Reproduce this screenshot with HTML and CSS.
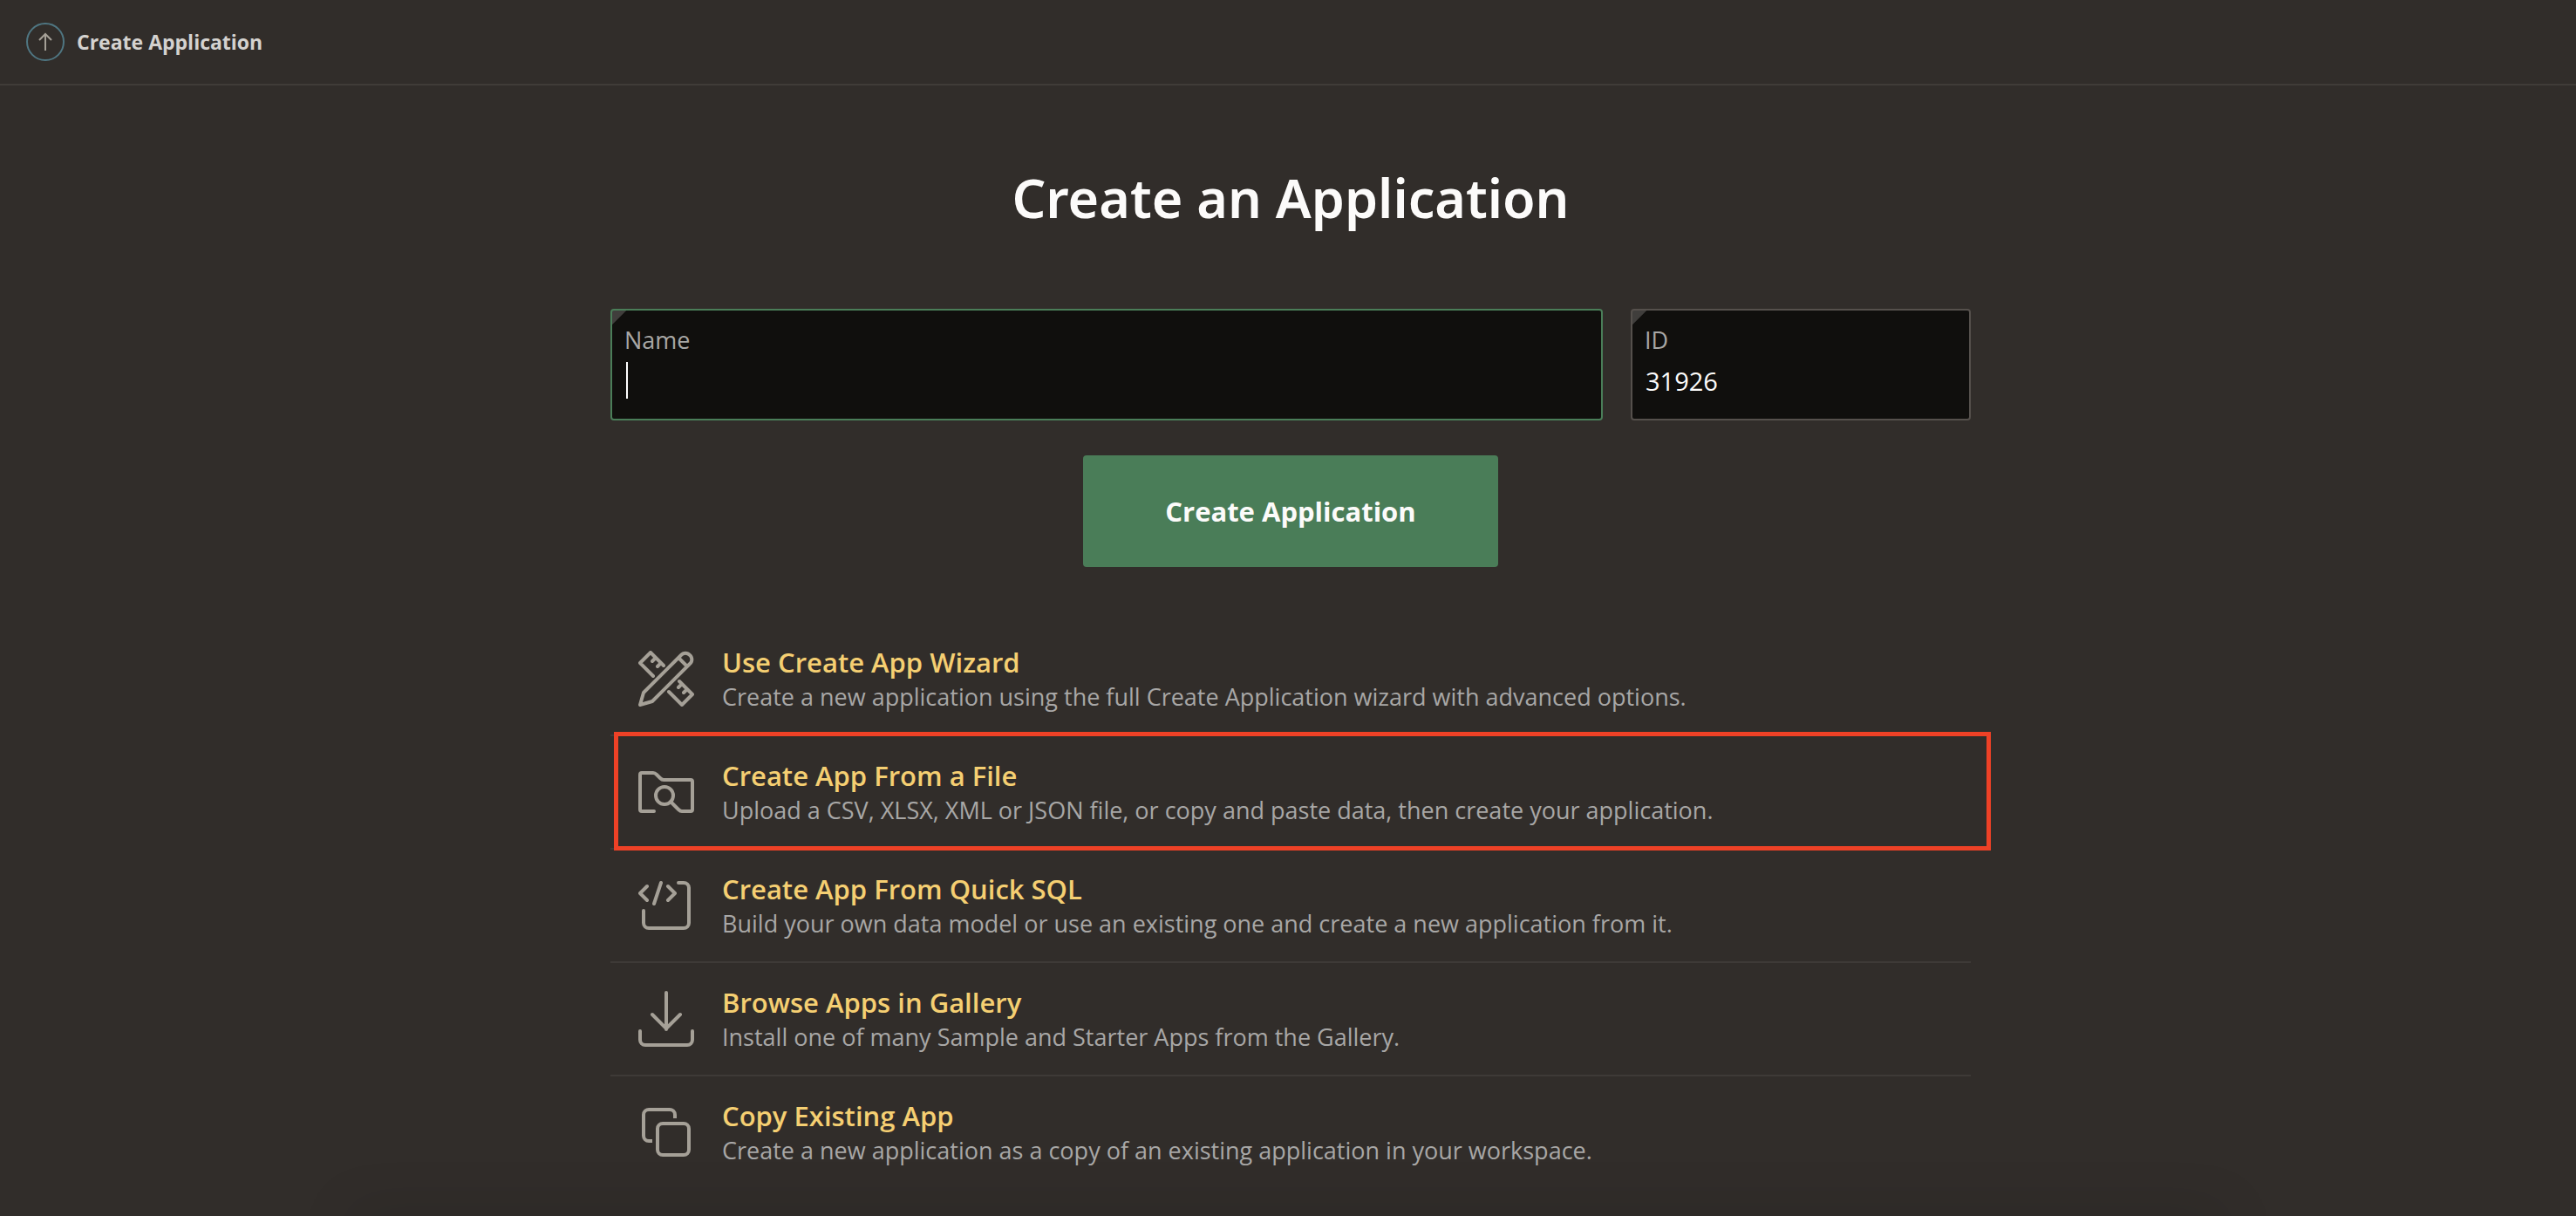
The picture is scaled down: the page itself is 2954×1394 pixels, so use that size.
FILE: index.html
```html
<!DOCTYPE html>
<html lang="en">
<head>
<meta charset="utf-8">
<title>Create Application</title>
<link rel="stylesheet" href="styles.css">
</head>
<body>
<header class="topbar">
  <button class="up-button" type="button" aria-label="Up">
    <svg width="20" height="22" viewBox="0 0 20 22" aria-hidden="true"><path d="M10 21V2M3 9l7-7 7 7"/></svg>
  </button>
  <span class="topbar-title">Create Application</span>
</header>

<main class="page">
  <h1 class="page-title">Create an Application</h1>

  <form class="app-form">
    <div class="fields">
      <div class="field field-active">
        <label class="field-label" for="app-name">Name</label>
        <input class="field-input with-caret" id="app-name" type="text" autocomplete="off">
      </div>
      <div class="field">
        <label class="field-label" for="app-id">ID</label>
        <input class="field-input" id="app-id" type="text" value="31926">
      </div>
    </div>
    <button class="create-button" type="button">Create Application</button>
  </form>

  <ul class="options">
    <li class="option">
      <svg class="option-icon" viewBox="0 0 64 64" aria-hidden="true">
        <path d="M2 62 6 48 49 5a6.500 6.500 0 0 1 10 0 6.500 6.500 0 0 1 0 10L16 58ZM46 8l10 10"/>
        <path d="M17 29 2 14 14 2l15 15M20 8l-4 4M26 14l-4 4"/>
        <path d="M35 47l15 15 12-12-15-15M50 38l-4 4M56 44l-4 4"/>
      </svg>
      <div class="option-text">
        <a class="option-title" href="#wizard">Use Create App Wizard</a>
        <p class="option-desc">Create a new application using the full Create Application wizard with advanced options.</p>
      </div>
    </li>
    <li class="option option-highlight">
      <svg class="option-icon" viewBox="0 0 64 64" aria-hidden="true">
        <path d="M18 54H4a2 2 0 0 1-2-2V12a2 2 0 0 1 2-2h13q2 0 4 2l4 4q2 2 4 2h31a2 2 0 0 1 2 2v32a2 2 0 0 1-2 2H50q-2 0-4-2l-9-9"/>
        <circle cx="30" cy="36" r="10"/>
      </svg>
      <div class="option-text">
        <a class="option-title" href="#file">Create App From a File</a>
        <p class="option-desc">Upload a CSV, XLSX, XML or JSON file, or copy and paste data, then create your application.</p>
      </div>
    </li>
    <li class="option">
      <svg class="option-icon" viewBox="0 0 64 64" aria-hidden="true">
        <path d="M10 10 2 18l8 8M26 6 18 30M34 10l8 8-8 8M46 6h6a6 6 0 0 1 6 6v40a6 6 0 0 1-6 6H12a6 6 0 0 1-6-6V38"/>
      </svg>
      <div class="option-text">
        <a class="option-title" href="#quick-sql">Create App From Quick SQL</a>
        <p class="option-desc">Build your own data model or use an existing one and create a new application from it.</p>
      </div>
    </li>
    <li class="option">
      <svg class="option-icon" viewBox="0 0 64 64" aria-hidden="true">
        <path d="M32 2v42M16 27l16 16 16-16M2 46v10a6 6 0 0 0 6 6h48a6 6 0 0 0 6-6V46"/>
      </svg>
      <div class="option-text">
        <a class="option-title" href="#gallery">Browse Apps in Gallery</a>
        <p class="option-desc">Install one of many Sample and Starter Apps from the Gallery.</p>
      </div>
    </li>
    <li class="option">
      <svg class="option-icon butt" viewBox="0 0 64 64" aria-hidden="true">
        <path d="M16 42h-4a6 6 0 0 1-6-6V12a6 6 0 0 1 6-6h24a6 6 0 0 1 6 6v4"/>
        <rect x="22" y="22" width="36" height="36" rx="6"/>
      </svg>
      <div class="option-text">
        <a class="option-title" href="#copy">Copy Existing App</a>
        <p class="option-desc">Create a new application as a copy of an existing application in your workspace.</p>
      </div>
    </li>
  </ul>
</main>
<div class="bottom-shade"></div>
</body>
</html>
```
FILE: styles.css
```css
* {
  box-sizing: border-box;
}

body {
  margin: 0;
  min-height: 100vh;
  background: #312d2a;
  color: #fcfbfa;
  font-family: "Open Sans", "Noto Sans", sans-serif;
}

svg {
  fill: none;
  stroke: #a5a097;
}

.topbar {
  display: flex;
  align-items: center;
  gap: 14px;
  padding: 26px 30px;
  border-bottom: 2px solid #403c38;
}

.up-button {
  display: flex;
  align-items: center;
  justify-content: center;
  width: 44px;
  height: 44px;
  padding: 0;
  border: 2px solid #4f7682;
  border-radius: 50%;
  background: none;
}

.up-button svg {
  stroke-width: 2;
}

.topbar-title {
  color: #d4d2cf;
  font-size: 23px;
  font-weight: 700;
  line-height: 32px;
}

.page {
  width: 100%;
  max-width: 1566px;
  margin: 0 auto;
  padding: 90px 0 32px 6px;
}

.page-title {
  margin: 0;
  font-family: "Noto Sans", "Open Sans", sans-serif;
  font-size: 61px;
  font-weight: 600;
  line-height: 78px;
  text-align: center;
}

.app-form {
  display: flex;
  flex-direction: column;
  align-items: center;
  gap: 40px;
  padding: 88px 0 64px;
}

.fields {
  display: grid;
  grid-template-columns: minmax(0, 1fr) 390px;
  gap: 32px;
  width: 100%;
}

.field {
  display: flex;
  flex-direction: column;
  height: 128px;
  padding: 14px;
  border: 2px solid #55504c;
  border-radius: 4px;
  background: linear-gradient(135deg, #403e3c 11px, transparent 12px) #100f0d;
}

.field-active {
  border-color: #4a7d58;
}

.field-label {
  color: #a8a7a5;
  font-size: 27px;
  line-height: 40px;
}

.field-input {
  width: 100%;
  height: 52px;
  padding: 0 1px;
  border: 0;
  outline: 0;
  background: none;
  color: #fcfbfa;
  font: 500 29px "Open Sans", "Noto Sans", sans-serif;
}

.with-caret {
  background: linear-gradient(#fff, #fff) 2px 5px / 2px 42px no-repeat;
}

.create-button {
  height: 128px;
  padding: 0 94px;
  border: 0;
  border-radius: 4px;
  background: #4a7d58;
  color: #fcfbfa;
  font: 700 31px "Open Sans", "Noto Sans", sans-serif;
}

.options {
  margin: 0;
  padding: 0;
  list-style: none;
}

.option {
  position: relative;
  display: flex;
  align-items: center;
  gap: 32px;
  padding: 24px 32px;
  border-bottom: 2px solid #3e3a37;
}

.option:last-child {
  border-bottom: 0;
}

.option-highlight::after {
  content: "";
  position: absolute;
  inset: -5px -23px -3px 4px;
  border: 5px solid #ee4126;
  pointer-events: none;
}

.option-icon {
  flex: none;
  width: 64px;
  height: 64px;
  stroke-width: 4;
  stroke-linecap: round;
  stroke-linejoin: round;
}

.butt {
  stroke-linecap: butt;
}

.option-title {
  display: block;
  color: #f5cf72;
  font-size: 31px;
  font-weight: 600;
  line-height: 42px;
  text-decoration: none;
}

.option-desc {
  margin: 0;
  color: #a8a7a6;
  font-size: 27px;
  line-height: 38px;
}

.bottom-shade {
  position: fixed;
  right: 14%;
  bottom: -12px;
  left: 14%;
  height: 0;
  box-shadow: 0 0 64px 12px rgba(0, 0, 0, 0.2);
}
```
